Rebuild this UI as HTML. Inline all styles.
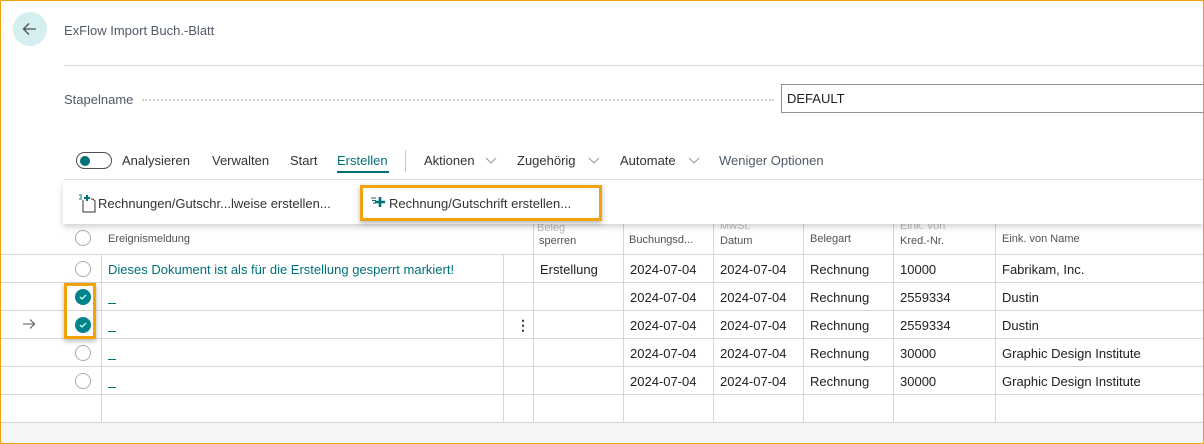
<!DOCTYPE html>
<html><head><meta charset="utf-8"><style>
*{box-sizing:border-box;margin:0;padding:0}
body{width:1204px;height:444px;overflow:hidden;background:#fff;font-family:"Liberation Sans",sans-serif;color:#212121;position:relative}
.frame{position:absolute;left:0;top:0;width:1204px;height:444px;border:1px solid #f0a30a;z-index:50;pointer-events:none}
.abs{position:absolute;white-space:nowrap}
.vl{position:absolute;width:1px;background:#d6d6d8}
.hl{position:absolute;height:1px;background:#d6d6d8}
.cell{position:absolute;font-size:13px;color:#212121;white-space:nowrap}
.rad{position:absolute;width:16px;height:16px;border:1.5px solid #a8abb0;border-radius:50%;left:75px}
.chk{position:absolute;width:16px;height:16px;border-radius:50%;background:#00838a;left:75px}
.hd{position:absolute;font-size:11px;color:#505050;white-space:nowrap}
.dash{position:absolute;left:108px;width:8px;height:1px;background:#00707a}
.chev{position:absolute;top:157px}
</style></head><body>
<div class="frame"></div>
<div class="abs" style="left:13px;top:12px;width:34px;height:34px;border-radius:50%;background:#d5eef0"></div>
<svg class="abs" style="left:20px;top:19px" width="20" height="20" viewBox="0 0 20 20"><path d="M16 10H4M9 4.5L3.5 10 9 15.5" stroke="#505050" stroke-width="1.3" fill="none"/></svg>
<div class="abs" style="left:64px;top:23px;font-size:13px;color:#505a66">ExFlow Import Buch.-Blatt</div>
<div class="hl" style="left:64px;top:65px;width:1140px"></div>
<div class="abs" style="left:64px;top:92px;font-size:13px;color:#505a66">Stapelname</div>
<div class="abs" style="left:142px;top:99px;width:632px;border-top:2px dotted #d0d0d0"></div>
<div class="abs" style="left:781px;top:84px;width:430px;height:29px;border:1px solid #8a9099"></div>
<div class="abs" style="left:787px;top:91px;font-size:13px;color:#212121">DEFAULT</div>
<div class="abs" style="left:76px;top:152px;width:36px;height:17px;border:1.5px solid #505050;border-radius:9px"></div>
<div class="abs" style="left:80px;top:156px;width:10px;height:10px;border-radius:50%;background:#00707a"></div>
<div class="abs" style="left:122px;top:153px;font-size:13px;color:#333">Analysieren</div>
<div class="abs" style="left:212px;top:153px;font-size:13px;color:#333">Verwalten</div>
<div class="abs" style="left:290px;top:153px;font-size:13px;color:#333">Start</div>
<div class="abs" style="left:337px;top:153px;font-size:13px;color:#00707a">Erstellen</div>
<div class="abs" style="left:337px;top:171px;width:52px;height:2px;background:#00707a"></div>
<div class="abs" style="left:405px;top:150px;width:1px;height:22px;background:#c8c8c8"></div>
<div class="abs" style="left:424px;top:153px;font-size:13px;color:#333">Aktionen</div>
<svg class="chev" style="left:485px" width="12" height="8"><path d="M1 1l5 5 5-5" stroke="#999" fill="none"/></svg>
<div class="abs" style="left:517px;top:153px;font-size:13px;color:#333">Zugehörig</div>
<svg class="chev" style="left:588px" width="12" height="8"><path d="M1 1l5 5 5-5" stroke="#999" fill="none"/></svg>
<div class="abs" style="left:620px;top:153px;font-size:13px;color:#333">Automate</div>
<svg class="chev" style="left:688px" width="12" height="8"><path d="M1 1l5 5 5-5" stroke="#999" fill="none"/></svg>
<div class="abs" style="left:719px;top:153px;font-size:13px;color:#505a66">Weniger Optionen</div>
<div class="hl" style="left:64px;top:179px;width:1140px;background:#e0e0e0"></div>
<div class="hd" style="left:537px;top:222px;color:#bbb">Beleg</div>
<div class="hd" style="left:720px;top:220px;color:#bbb">MwSt.</div>
<div class="hd" style="left:900px;top:220px;color:#bbb">Eink. von</div>
<div class="rad" style="top:230px"></div>
<div class="hd" style="left:108px;top:233px">Ereignismeldung</div>
<div class="hd" style="left:539px;top:235px">sperren</div>
<div class="hd" style="left:629px;top:234px">Buchungsd...</div>
<div class="hd" style="left:720px;top:235px">Datum</div>
<div class="hd" style="left:810px;top:233px">Belegart</div>
<div class="hd" style="left:900px;top:235px">Kred.-Nr.</div>
<div class="hd" style="left:1002px;top:233px">Eink. von Name</div>
<div class="hl" style="left:0;top:254px;width:1204px"></div>
<div class="hl" style="left:0;top:282px;width:1204px"></div>
<div class="hl" style="left:0;top:310px;width:1204px"></div>
<div class="hl" style="left:0;top:338px;width:1204px"></div>
<div class="hl" style="left:0;top:366px;width:1204px"></div>
<div class="hl" style="left:0;top:394px;width:1204px"></div>
<div class="hl" style="left:0;top:422px;width:1204px"></div>
<div class="vl" style="left:101px;top:254px;height:168px"></div>
<div class="vl" style="left:503px;top:254px;height:168px"></div>
<div class="vl" style="left:533px;top:220px;height:202px"></div>
<div class="vl" style="left:623px;top:220px;height:202px"></div>
<div class="vl" style="left:713px;top:220px;height:202px"></div>
<div class="vl" style="left:803px;top:220px;height:202px"></div>
<div class="vl" style="left:893px;top:220px;height:202px"></div>
<div class="vl" style="left:995px;top:220px;height:202px"></div>
<div class="abs" style="left:1px;top:423px;width:1202px;height:20px;background:#f4f5f7"></div>
<div class="rad" style="top:261px"></div>
<div class="cell" style="left:108px;top:262px;color:#00707a">Dieses Dokument ist als für die Erstellung gesperrt markiert!</div>
<div class="cell" style="left:540px;top:262px">Erstellung</div>
<div class="chk" style="top:289px"></div>
<div class="chk" style="top:317px"></div>
<svg class="abs" style="left:78px;top:292px" width="10" height="10"><path d="M2 5l2 2 4-4" stroke="#cfe" stroke-width="1.3" fill="none"/></svg>
<svg class="abs" style="left:78px;top:320px" width="10" height="10"><path d="M2 5l2 2 4-4" stroke="#cfe" stroke-width="1.3" fill="none"/></svg>
<div class="rad" style="top:345px"></div>
<div class="rad" style="top:373px"></div>
<div class="abs" style="left:64px;top:283px;width:32px;height:56px;border:3px solid #f0a30a;box-shadow:0 2px 5px rgba(0,0,0,.3)"></div>
<svg class="abs" style="left:22px;top:318px" width="14" height="12" viewBox="0 0 14 12"><path d="M1 6h12M8 1.5L12.5 6 8 10.5" stroke="#555" stroke-width="1" fill="none"/></svg>
<div class="abs" style="left:516px;top:317px;font-size:14px;color:#333;font-weight:bold">&#8942;</div>
<div class="dash" style="top:303px"></div><div class="dash" style="top:331px"></div><div class="dash" style="top:359px"></div><div class="dash" style="top:387px"></div>
<div class="cell" style="left:630px;top:262px">2024-07-04</div><div class="cell" style="left:720px;top:262px">2024-07-04</div><div class="cell" style="left:810px;top:262px">Rechnung</div><div class="cell" style="left:900px;top:262px">10000</div><div class="cell" style="left:1002px;top:262px">Fabrikam, Inc.</div>
<div class="cell" style="left:630px;top:290px">2024-07-04</div><div class="cell" style="left:720px;top:290px">2024-07-04</div><div class="cell" style="left:810px;top:290px">Rechnung</div><div class="cell" style="left:900px;top:290px">2559334</div><div class="cell" style="left:1002px;top:290px">Dustin</div>
<div class="cell" style="left:630px;top:318px">2024-07-04</div><div class="cell" style="left:720px;top:318px">2024-07-04</div><div class="cell" style="left:810px;top:318px">Rechnung</div><div class="cell" style="left:900px;top:318px">2559334</div><div class="cell" style="left:1002px;top:318px">Dustin</div>
<div class="cell" style="left:630px;top:346px">2024-07-04</div><div class="cell" style="left:720px;top:346px">2024-07-04</div><div class="cell" style="left:810px;top:346px">Rechnung</div><div class="cell" style="left:900px;top:346px">30000</div><div class="cell" style="left:1002px;top:346px">Graphic Design Institute</div>
<div class="cell" style="left:630px;top:374px">2024-07-04</div><div class="cell" style="left:720px;top:374px">2024-07-04</div><div class="cell" style="left:810px;top:374px">Rechnung</div><div class="cell" style="left:900px;top:374px">30000</div><div class="cell" style="left:1002px;top:374px">Graphic Design Institute</div>
<div class="abs" style="left:63px;top:181px;width:1141px;height:43px;background:#fff;box-shadow:0 3px 6px rgba(0,0,0,.18)"></div>
<svg class="abs" style="left:78px;top:193px" width="18" height="20" viewBox="0 0 18 20"><path d="M5 7v12h12V8l-2-2h-2" stroke="#333" stroke-width="1" fill="none"/><path d="M9 2v6M6 5h6" stroke="#00707a" stroke-width="2"/><path d="M1 2h3M2 4h2M1 6h3" stroke="#00707a" stroke-width="1"/></svg>
<div class="abs" style="left:98px;top:196px;font-size:13px;color:#333">Rechnungen/Gutschr...lweise erstellen...</div>
<div class="abs" style="left:360px;top:185px;width:242px;height:36px;border:3px solid #f0a30a;box-shadow:0 2px 5px rgba(0,0,0,.3)"></div>
<svg class="abs" style="left:370px;top:196px" width="16" height="14" viewBox="0 0 16 14"><path d="M1 2h5M2 4.5h4M3 7h3" stroke="#00707a" stroke-width="1"/><path d="M10 1v10M5 6h10" stroke="#00707a" stroke-width="2.6"/></svg>
<div class="abs" style="left:389px;top:196px;font-size:13px;color:#333">Rechnung/Gutschrift erstellen...</div>
</body></html>
